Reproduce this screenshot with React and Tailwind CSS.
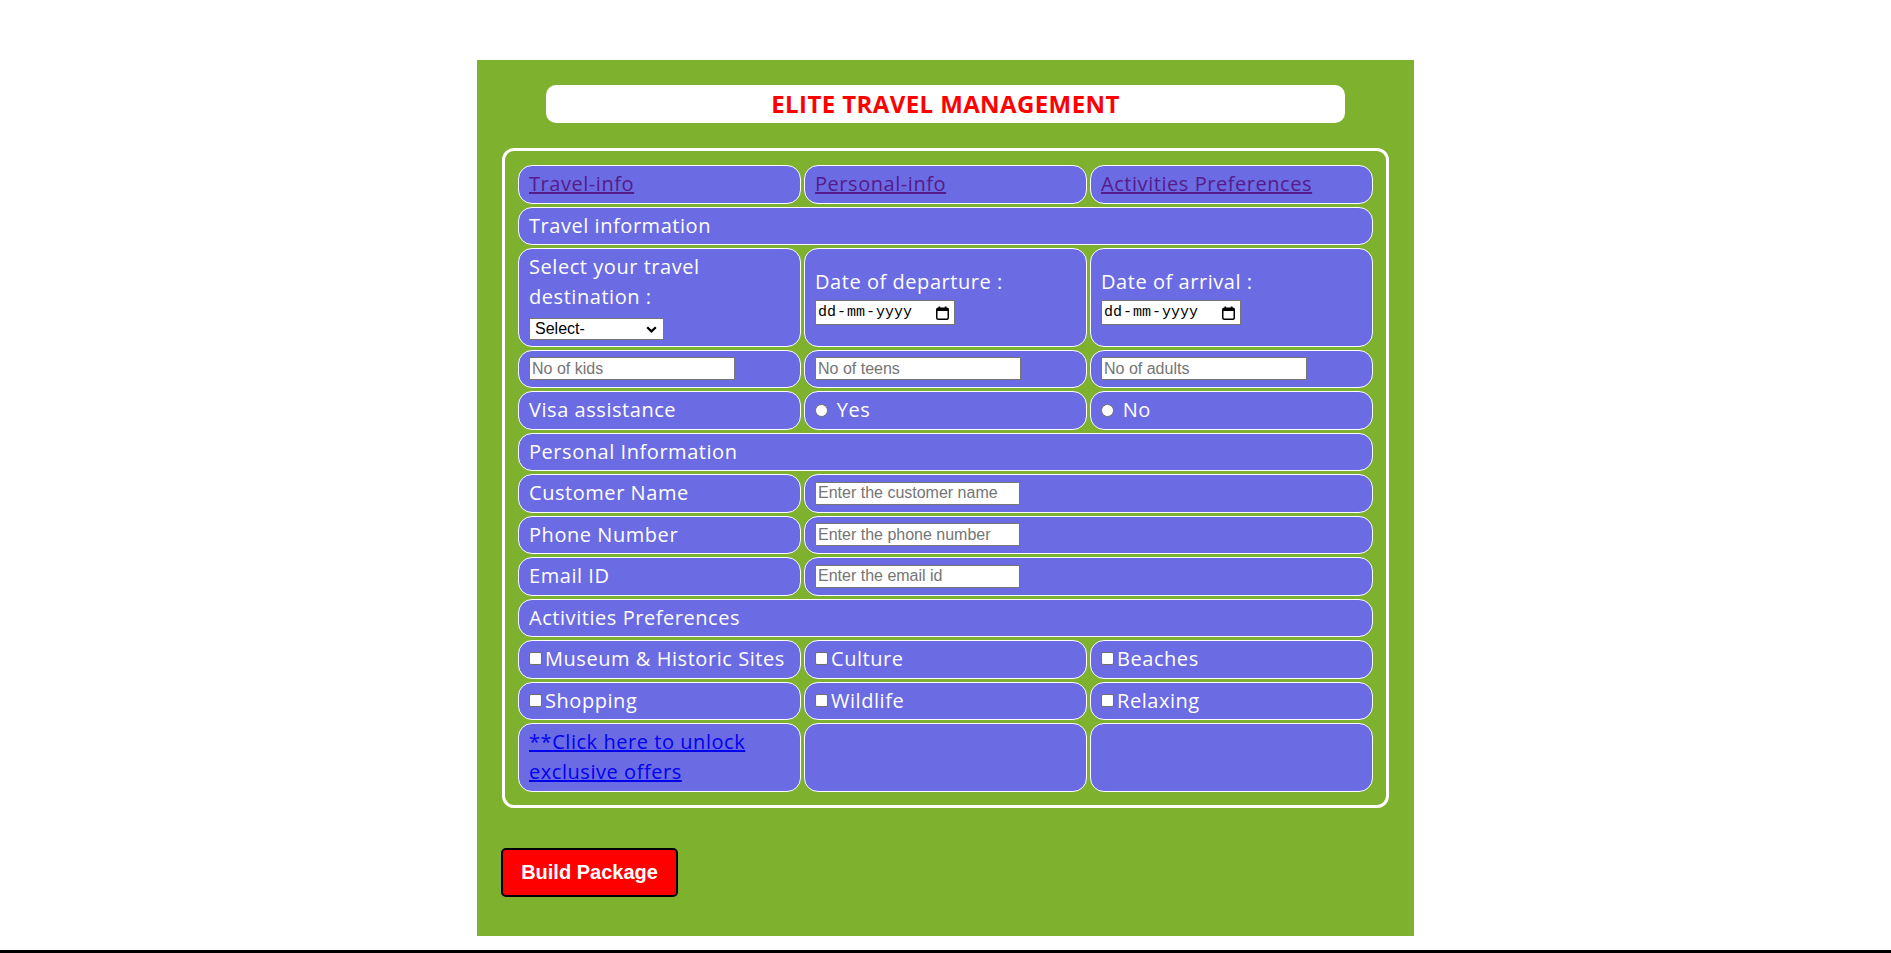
import { useState } from "react";

const cell =
  "min-h-[38.5px] rounded-[14px] border border-white bg-[#6b6be3] px-[10px] py-[3.25px] leading-[30px] text-white";

const boxInput =
  "appearance-none h-[13px] w-[13px] border border-[#6f6f6f] bg-white";

function TextBox({ placeholder, width = "w-[206px]" }) {
  return (
    <input
      type="text"
      placeholder={placeholder}
      className={`${width} h-[23px] border border-[#767676] bg-white px-[2px] font-['Liberation_Sans',Arial,sans-serif] text-[16px] leading-[19px] tracking-normal text-black placeholder:text-[#757575] outline-none`}
    />
  );
}

function CalendarIcon() {
  return (
    <svg width="13" height="14" viewBox="0 0 13 14" aria-hidden="true">
      <rect x="0.75" y="2.25" width="11.5" height="11" rx="1.5" fill="none" stroke="#000" strokeWidth="1.5" />
      <rect x="0.75" y="2.25" width="11.5" height="2.75" fill="#000" />
      <rect x="2.5" y="0.5" width="1.75" height="2.5" fill="#000" />
      <rect x="8.75" y="0.5" width="1.75" height="2.5" fill="#000" />
    </svg>
  );
}

function DateBox() {
  return (
    <div className="flex h-[25px] w-[140px] items-center justify-between border border-[#767676] bg-white pl-[2px] pr-[5px] font-['Liberation_Mono',monospace] text-[15px] leading-[18px] tracking-normal text-black">
      <span className="flex gap-[1px]">
        <span>dd</span>
        <span>-</span>
        <span>mm</span>
        <span>-</span>
        <span>yyyy</span>
      </span>
      <CalendarIcon />
    </div>
  );
}

function SelectBox() {
  return (
    <div
      role="combobox"
      aria-expanded="false"
      className="flex h-[22px] w-[135px] items-center justify-between border border-[#767676] bg-white pl-[5px] pr-[6px] font-['Liberation_Sans',Arial,sans-serif] text-[16px] leading-[18px] tracking-normal text-black"
    >
      <span>Select-</span>
      <svg width="11" height="7" viewBox="0 0 11 7" aria-hidden="true">
        <path d="M1.2 1.2 L5.5 5.4 L9.8 1.2" fill="none" stroke="#000" strokeWidth="2.2" />
      </svg>
    </div>
  );
}

function Check({ label }) {
  return (
    <div className={cell}>
      <label>
        <input type="checkbox" className={`${boxInput} mr-[3px] rounded-[2px] align-[1px]`} />
        {label}
      </label>
    </div>
  );
}

export default function App() {
  const [visa, setVisa] = useState("");

  return (
    <div className="min-h-[953px] bg-white pt-[60px] font-['Open_Sans',sans-serif] text-[20px] tracking-[0.55px]">
      <div className="mx-auto w-[937px] bg-[#7eb12d] pb-[39px] pt-[25px]">
        <div className="mx-auto flex h-[38px] w-[799px] items-center justify-center rounded-[10px] bg-white">
          <h1 className="text-[24px] font-bold leading-none tracking-[0.4px] text-[#ff0000]">
            ELITE TRAVEL MANAGEMENT
          </h1>
        </div>

        <div className="mx-[25px] mt-[25px] rounded-[12px] border-[3px] border-white px-[13px] pb-[13px] pt-[14px]">
          <div className="grid grid-cols-3 gap-[3px] font-medium">
            <div className={cell}>
              <a href="#travel" className="text-[#551a8b] underline">Travel-info</a>
            </div>
            <div className={cell}>
              <a href="#personal" className="text-[#551a8b] underline">Personal-info</a>
            </div>
            <div className={cell}>
              <a href="#activities" className="text-[#551a8b] underline">Activities Preferences</a>
            </div>

            <div id="travel" className={`${cell} col-span-3`}>Travel information</div>

            <div className={cell}>
              <div>
                Select your travel
                <br />
                destination :
              </div>
              <div className="h-[30px] pt-[6px]">
                <SelectBox />
              </div>
            </div>
            <div className={`${cell} flex flex-col justify-center`}>
              <div>Date of departure :</div>
              <div className="mb-[2px] mt-[3px]">
                <DateBox />
              </div>
            </div>
            <div className={`${cell} flex flex-col justify-center`}>
              <div>Date of arrival :</div>
              <div className="mb-[2px] mt-[3px]">
                <DateBox />
              </div>
            </div>

            <div className={`${cell} flex items-center`}>
              <TextBox placeholder="No of kids" />
            </div>
            <div className={`${cell} flex items-center`}>
              <TextBox placeholder="No of teens" />
            </div>
            <div className={`${cell} flex items-center`}>
              <TextBox placeholder="No of adults" />
            </div>

            <div className={cell}>Visa assistance</div>
            <div className={cell}>
              <label>
                <input
                  type="radio"
                  name="visa"
                  checked={visa === "yes"}
                  onChange={() => setVisa("yes")}
                  className={`${boxInput} mr-[3px] rounded-full align-[0px]`}
                />{" "}
                Yes
              </label>
            </div>
            <div className={cell}>
              <label>
                <input
                  type="radio"
                  name="visa"
                  checked={visa === "no"}
                  onChange={() => setVisa("no")}
                  className={`${boxInput} mr-[3px] rounded-full align-[0px]`}
                />{" "}
                No
              </label>
            </div>

            <div id="personal" className={`${cell} col-span-3`}>Personal Information</div>

            <div className={cell}>Customer Name</div>
            <div className={`${cell} col-span-2 flex items-center`}>
              <TextBox placeholder="Enter the customer name" width="w-[205px]" />
            </div>
            <div className={cell}>Phone Number</div>
            <div className={`${cell} col-span-2 flex items-center`}>
              <TextBox placeholder="Enter the phone number" width="w-[205px]" />
            </div>
            <div className={cell}>Email ID</div>
            <div className={`${cell} col-span-2 flex items-center`}>
              <TextBox placeholder="Enter the email id" width="w-[205px]" />
            </div>

            <div id="activities" className={`${cell} col-span-3`}>Activities Preferences</div>

            <Check label="Museum & Historic Sites" />
            <Check label="Culture" />
            <Check label="Beaches" />
            <Check label="Shopping" />
            <Check label="Wildlife" />
            <Check label="Relaxing" />

            <div className={cell}>
              <a href="#offers" className="text-[#0000ee] underline">
                **Click here to unlock exclusive offers
              </a>
            </div>
            <div className={cell}></div>
            <div className={cell}></div>
          </div>
        </div>

        <button
          type="button"
          className="ml-[24px] mt-[40px] h-[49px] w-[177px] rounded-[5px] border-2 border-black bg-[#ff0000] font-['Liberation_Sans',Arial,sans-serif] text-[20px] font-bold tracking-normal text-white"
        >
          Build Package
        </button>
      </div>
      <div className="mt-[14px] h-[4px] bg-black"></div>
    </div>
  );
}
